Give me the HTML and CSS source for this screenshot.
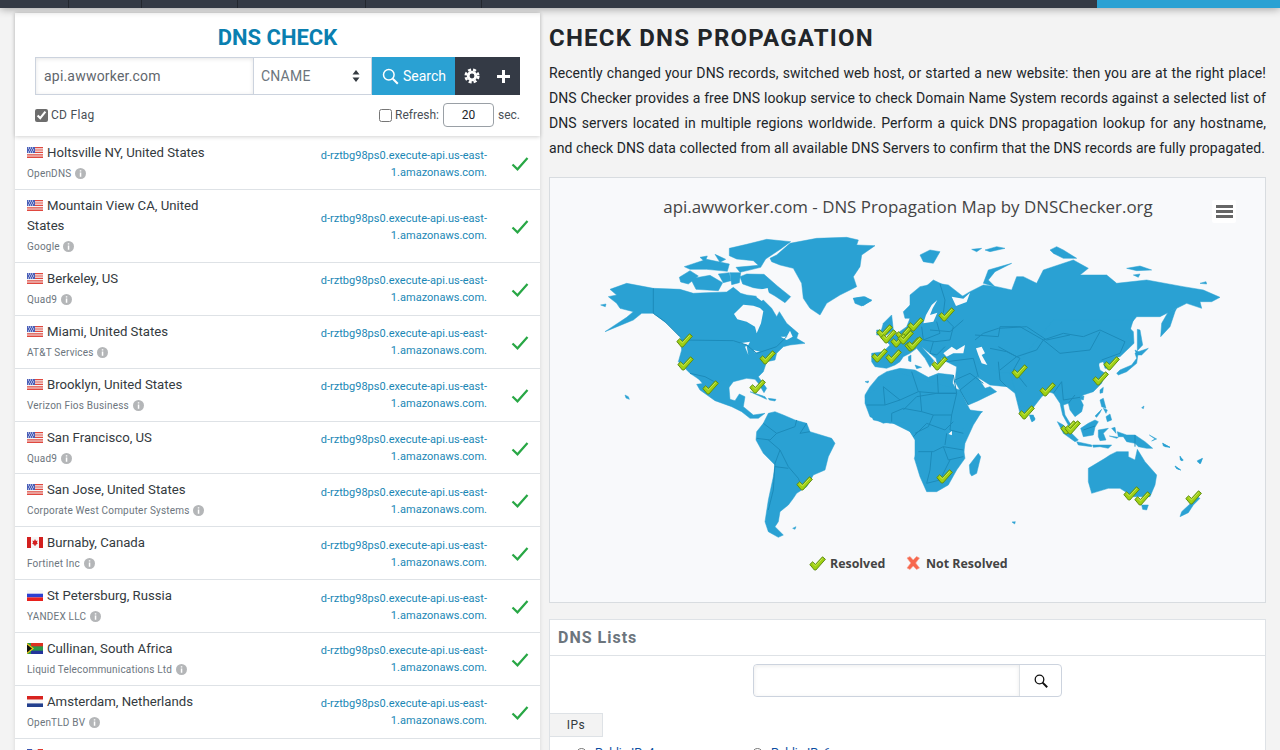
FILE: index.html
```html
<!DOCTYPE html>
<html lang="en">
<head>
<meta charset="utf-8">
<title>DNS Check</title>
<link rel="stylesheet" href="styles.css">
</head>
<body>
<svg class="defs" width="0" height="0" aria-hidden="true">
  <symbol id="f-us" viewBox="0 0 16 11"><rect width="16" height="11" fill="#f4f4f4"/><path d="M0 0h16v1.2H0zM0 2.4h16v1.2H0zM0 4.8h16v1.2H0zM0 7.2h16v1.2H0zM0 9.6h16V11H0z" fill="#e0483f"/><rect width="8" height="6" fill="#4a5fb8"/><path d="M1 1h1M3 1h1M5 1h1M2 3h1M4 3h1M6 3h1M1 5h1M3 5h1M5 5h1" stroke="#fff"/></symbol>
  <symbol id="f-ca" viewBox="0 0 16 11"><rect width="16" height="11" fill="#f6f6f6"/><rect width="4" height="11" fill="#d3201f"/><rect x="12" width="4" height="11" fill="#d3201f"/><path d="M8 2l1 2 1.500-.5-.5 2.500 1 .5-2.500 1.500v1H7.500V8L5 6.500 6 6l-.5-2.500L7 4z" fill="#d3201f"/></symbol>
  <symbol id="f-ru" viewBox="0 0 16 11"><rect width="16" height="3.700" fill="#f6f6f6"/><rect y="3.700" width="16" height="3.700" fill="#2b3fd0"/><rect y="7.400" width="16" height="3.600" fill="#e8201c"/></symbol>
  <symbol id="f-za" viewBox="0 0 16 11"><rect width="16" height="11" fill="#2a9a4a"/><rect x="4" width="12" height="3.300" fill="#dd3020"/><rect x="4" y="7.700" width="12" height="3.300" fill="#24349c"/><path d="M0 0l7 5.500L0 11z" fill="#f0c814"/><path d="M0 1.500l5 4-5 4z" fill="#111"/></symbol>
  <symbol id="f-nl" viewBox="0 0 16 11"><rect width="16" height="3.700" fill="#d8231f"/><rect y="3.700" width="16" height="3.700" fill="#f6f6f6"/><rect y="7.400" width="16" height="3.600" fill="#23408e"/></symbol>
  <symbol id="f-fr" viewBox="0 0 16 11"><rect width="5.400" height="11" fill="#3a55b0"/><rect x="5.400" width="5.300" height="11" fill="#f6f6f6"/><rect x="10.700" width="5.300" height="11" fill="#e0382f"/></symbol>
  <symbol id="info" viewBox="0 0 11 11"><circle cx="5.500" cy="5.500" r="5.500" fill="#b4b6b8"/><path d="M4.800 2.200h1.500v1.400H4.800zM4.800 4.600h1.500v4.200H4.800z" fill="#fff"/></symbol>
  <symbol id="ok" viewBox="0 0 18 15"><path d="M1.500 8.500l5 4.800L16.500 2" fill="none" stroke="#28a745" stroke-width="2.200"/></symbol>
  <symbol id="chk" viewBox="0 0 17 15"><path d="M.8 8.500L3.600 5.800l2.800 2.700L13.500.8l2.900 2.500L6.900 14H5.400z" fill="#9fd012" stroke="#5f8c14"/><path d="M3.600 7.200l2.900 2.700 7.100-7.600" fill="none" stroke="#c6e85a"/></symbol>
</svg>

<nav class="topbar">
  <span class="nav-item nav-a"></span><span class="nav-item nav-b"></span><span class="nav-item nav-c"></span><span class="nav-item nav-d"></span><span class="nav-item nav-e"></span>
  <span class="nav-accent"></span>
</nav>

<main class="page">
  <aside class="sidebar">
    <section class="check-form">
      <h2 class="check-title">DNS CHECK</h2>
      <div class="search-row">
        <input class="host-input" type="text" value="api.awworker.com">
        <div class="type-select"><span>CNAME</span>
          <svg width="8" height="12" viewBox="0 0 8 12"><path d="M4 0l3.500 4.500h-7zM4 12L.5 7.500h7z" fill="#343a40"/></svg>
        </div>
        <button class="search-btn" type="button">
          <svg width="17" height="17" viewBox="0 0 17 17"><circle cx="6.800" cy="6.800" r="5.300" fill="none" stroke="#fff" stroke-width="1.500"/><path d="M10.800 10.800l5 5" stroke="#fff" stroke-width="2"/></svg>
          Search
        </button>
        <div class="tool-btns">
          <svg width="16" height="16" viewBox="0 0 16 16"><circle cx="8" cy="8" r="3.800" fill="none" stroke="#fff" stroke-width="2.800"/><circle cx="8" cy="8" r="6.300" fill="none" stroke="#fff" stroke-width="2.600" stroke-dasharray="3 2"/></svg>
          <svg width="13" height="13" viewBox="0 0 13 13"><path d="M5 0h3v5h5v3H8v5H5V8H0V5h5z" fill="#fff"/></svg>
        </div>
      </div>
      <div class="options-row">
        <label class="opt cd"><input class="cd-check" type="checkbox" checked> CD Flag</label>
        <label class="opt refresh"><input class="refresh-check" type="checkbox"> Refresh:
          <input class="refresh-input" type="text" value="20"> sec.</label>
      </div>
    </section>

    <ul class="results">
      <li class="result"><div class="place"><div class="city"><svg class="flag"><use href="#f-us"/></svg>Holtsville NY, United States</div><div class="isp">OpenDNS <svg class="info"><use href="#info"/></svg></div></div><div class="answer">d-rztbg98ps0.execute-api.us-east-1.amazonaws.com.</div><svg class="ok"><use href="#ok"/></svg></li>
      <li class="result"><div class="place"><div class="city"><svg class="flag"><use href="#f-us"/></svg>Mountain View CA, United States</div><div class="isp">Google <svg class="info"><use href="#info"/></svg></div></div><div class="answer">d-rztbg98ps0.execute-api.us-east-1.amazonaws.com.</div><svg class="ok"><use href="#ok"/></svg></li>
      <li class="result"><div class="place"><div class="city"><svg class="flag"><use href="#f-us"/></svg>Berkeley, US</div><div class="isp">Quad9 <svg class="info"><use href="#info"/></svg></div></div><div class="answer">d-rztbg98ps0.execute-api.us-east-1.amazonaws.com.</div><svg class="ok"><use href="#ok"/></svg></li>
      <li class="result"><div class="place"><div class="city"><svg class="flag"><use href="#f-us"/></svg>Miami, United States</div><div class="isp">AT&amp;T Services <svg class="info"><use href="#info"/></svg></div></div><div class="answer">d-rztbg98ps0.execute-api.us-east-1.amazonaws.com.</div><svg class="ok"><use href="#ok"/></svg></li>
      <li class="result"><div class="place"><div class="city"><svg class="flag"><use href="#f-us"/></svg>Brooklyn, United States</div><div class="isp">Verizon Fios Business <svg class="info"><use href="#info"/></svg></div></div><div class="answer">d-rztbg98ps0.execute-api.us-east-1.amazonaws.com.</div><svg class="ok"><use href="#ok"/></svg></li>
      <li class="result"><div class="place"><div class="city"><svg class="flag"><use href="#f-us"/></svg>San Francisco, US</div><div class="isp">Quad9 <svg class="info"><use href="#info"/></svg></div></div><div class="answer">d-rztbg98ps0.execute-api.us-east-1.amazonaws.com.</div><svg class="ok"><use href="#ok"/></svg></li>
      <li class="result"><div class="place"><div class="city"><svg class="flag"><use href="#f-us"/></svg>San Jose, United States</div><div class="isp">Corporate West Computer Systems <svg class="info"><use href="#info"/></svg></div></div><div class="answer">d-rztbg98ps0.execute-api.us-east-1.amazonaws.com.</div><svg class="ok"><use href="#ok"/></svg></li>
      <li class="result"><div class="place"><div class="city"><svg class="flag"><use href="#f-ca"/></svg>Burnaby, Canada</div><div class="isp">Fortinet Inc <svg class="info"><use href="#info"/></svg></div></div><div class="answer">d-rztbg98ps0.execute-api.us-east-1.amazonaws.com.</div><svg class="ok"><use href="#ok"/></svg></li>
      <li class="result"><div class="place"><div class="city"><svg class="flag"><use href="#f-ru"/></svg>St Petersburg, Russia</div><div class="isp">YANDEX LLC <svg class="info"><use href="#info"/></svg></div></div><div class="answer">d-rztbg98ps0.execute-api.us-east-1.amazonaws.com.</div><svg class="ok"><use href="#ok"/></svg></li>
      <li class="result"><div class="place"><div class="city"><svg class="flag"><use href="#f-za"/></svg>Cullinan, South Africa</div><div class="isp">Liquid Telecommunications Ltd <svg class="info"><use href="#info"/></svg></div></div><div class="answer">d-rztbg98ps0.execute-api.us-east-1.amazonaws.com.</div><svg class="ok"><use href="#ok"/></svg></li>
      <li class="result"><div class="place"><div class="city"><svg class="flag"><use href="#f-nl"/></svg>Amsterdam, Netherlands</div><div class="isp">OpenTLD BV <svg class="info"><use href="#info"/></svg></div></div><div class="answer">d-rztbg98ps0.execute-api.us-east-1.amazonaws.com.</div><svg class="ok"><use href="#ok"/></svg></li>
      <li class="result"><div class="place"><div class="city"><svg class="flag"><use href="#f-fr"/></svg>Paris, France</div></div></li>
    </ul>
  </aside>

  <div class="content">
    <h1 class="headline">CHECK DNS PROPAGATION</h1>
    <p class="intro">Recently changed your DNS records, switched web host, or started a new website: then you are at the right place! DNS Checker provides a free DNS lookup service to check Domain Name System records against a selected list of DNS servers located in multiple regions worldwide. Perform a quick DNS propagation lookup for any hostname, and check DNS data collected from all available DNS Servers to confirm that the DNS records are fully propagated.</p>

    <section class="map-card">
      <svg class="map" viewBox="550 178 715 424" width="715" height="424">
        <text class="map-title" x="908" y="213" text-anchor="middle">api.awworker.com - DNS Propagation Map by DNSChecker.org</text>
        <rect x="1212" y="200" width="24" height="23" rx="2" fill="#fff"/>
        <path d="M1216 205h17v3h-17zM1216 210h17v3h-17zM1216 215h17v3h-17z" fill="#666"/>

        <g transform="translate(590 180) scale(.33333)">
          <g class="land">
            <polygon points="60,328 110,310 190,325 270,328 310,340 350,338 410,336 430,322 452,340 470,345 510,350 545,385 560,410 568,395 590,430 625,460 620,475 645,490 600,495 580,500 560,520 555,540 530,545 520,575 505,590 530,625 522,638 505,610 495,598 470,595 430,605 415,625 415,650 400,665 375,660 330,600 300,580 265,545 275,510 270,470 260,460 230,430 190,400 155,400 130,420 45,455 110,412 130,395 90,385 80,370 55,350 80,345"/>
            <polygon points="268,292 300,272 325,288 295,312 272,306"/>
            <polygon points="302,296 360,286 398,308 385,332 318,328"/>
            <polygon points="385,282 418,278 423,302 400,308"/>
            <polygon points="420,278 452,278 448,308 425,314"/>
            <polygon points="283,260 350,238 418,252 412,274 350,268 300,268"/>
            <polygon points="330,232 352,228 345,246"/>
            <polygon points="375,223 407,238 390,247"/>
            <polygon points="418,205 470,193 530,178 602,185 572,207 527,237 512,262 450,277 438,262 505,256 490,242 440,237 418,227"/>
            <polygon points="450,290 470,282 522,283 562,318 602,350 585,368 555,348 520,328 490,323 458,312"/>
            <polygon points="540,235 560,225 600,190 680,175 770,172 805,180 800,195 855,197 815,225 810,260 790,290 800,320 750,345 710,370 690,405 660,385 640,355 635,310 610,265 570,255 545,245"/>
            <polygon points="790,355 825,350 845,362 815,378 795,370"/>
            <polygon points="320,590 345,610 365,640 340,612"/>
            <polygon points="32,375 48,372 46,380"/>
            <polygon points="105,645 115,650 118,658 108,654"/>
          </g>
          <g class="water">
            <polygon points="432,402 460,374 490,377 510,384 520,394 513,430 500,460 495,440 470,425 442,418"/>
            <polygon points="497,332 533,324 538,345 515,363 500,352"/>
            <polygon points="450,490 480,485 475,495"/>
            <polygon points="465,500 475,525 470,498"/>
            <polygon points="490,510 510,515 495,518"/>
            <polygon points="572,470 590,470 600,452 608,470 590,480"/>
          </g>
          <g class="border">
            <polyline points="190,325 190,400 225,425 270,470"/>
            <polyline points="272,480 430,482 470,495 500,520 560,500 590,470"/>
            <polyline points="300,580 345,590 400,620 415,650"/>
          </g>
        </g>

        <g transform="translate(850 290) scale(.33333)">
          <g class="land">
            <polygon points="65,190 100,185 120,165 105,150 135,135 170,110 180,85 165,85 160,65 190,35 210,5 250,-30 294,-9 339,30 375,30 420,15 600,100 700,200 660,300 640,310 600,300 575,320 525,385 510,370 495,310 470,290 420,285 380,260 385,265 405,295 420,290 440,305 385,332 355,345 315,275 320,230 290,215 275,205 265,235 258,205 215,170 252,212 240,232 225,205 200,175 180,190 160,200 150,215 135,225 110,235 75,230 65,215"/>
            <polygon points="100,100 125,75 130,120 110,135 90,135"/>
            <polygon points="80,120 95,120 92,135 80,135"/>
            <polygon points="45,315 60,290 85,260 110,245 150,235 195,240 235,262 265,250 310,255 308,280 350,350 365,365 395,365 370,405 345,460 340,500 195,500 195,450 180,425 120,395 100,400 60,380 45,340"/>
            <polygon points="545,375 555,385 548,395 542,385"/>
            <polygon points="175,200 183,195 183,215 176,213"/>
            <polygon points="195,225 215,232 200,236"/>
            <polygon points="10,25 40,20 65,30 40,47 20,40"/>
            <polygon points="45,275 56,273 54,279"/>
          </g>
        </g>

        <g transform="translate(920 180) scale(.33333)">
          <g class="land">
            <polygon points="-30,345 0,320 50,310 85,315 130,350 100,365 150,335 190,315 230,320 275,330 290,290 310,290 350,310 370,270 460,240 505,265 480,285 560,285 590,310 680,300 790,320 850,330 900,352 875,365 840,365 845,385 800,370 770,385 720,410 650,410 625,440 640,455 642,490 600,530 540,540 530,580 240,580 -30,450"/>
            <polygon points="770,385 745,395 725,430 722,470 750,440 765,395"/>
            <polygon points="0,225 30,210 60,215 40,250 10,245"/>
            <polygon points="155,208 185,205 170,215"/>
            <polygon points="195,210 230,200 255,205 210,215"/>
            <polygon points="190,310 205,270 275,250 225,275 205,300 225,320"/>
            <polygon points="390,210 410,200 430,210 470,235 430,235 400,220"/>
            <polygon points="620,265 660,258 695,270 650,272"/>
            <polygon points="640,285 660,282 655,292"/>
            <polygon points="840,310 858,305 860,312"/>
            <polygon points="652,448 660,450 668,495 652,512"/>
          </g>
        </g>

        <g transform="translate(1020 340) scale(.33333)">
          <g class="land">
            <polygon points="340,-60 310,35 285,55 270,85 255,85 250,65 235,70 240,90 255,100 245,130 220,155 190,165 180,175 190,195 185,215 165,230 150,210 145,190 130,195 135,225 150,250 165,270 150,265 128,225 120,190 100,160 85,155 60,165 40,195 0,200 -30,100 100,-60"/>
            <polygon points="290,100 300,90 335,75 350,55 345,40 355,35 350,70 320,95 295,105"/>
            <polygon points="345,30 355,35 385,25 365,45 350,45"/>
            <polygon points="240,150 250,142 248,158 240,160"/>
            <polygon points="178,170 192,168 190,180 180,178"/>
            <polygon points="240,180 250,175 258,205 245,200"/>
            <polygon points="258,230 270,222 275,240 262,245"/>
            <polygon points="225,228 245,208 240,218 230,232"/>
            <polygon points="250,205 262,210 258,220"/>
            <polygon points="112,245 130,255 175,300 165,305 130,280"/>
            <polygon points="170,305 215,315 215,320 175,315"/>
            <polygon points="218,315 275,315 265,325 240,320 220,322"/>
            <polygon points="182,265 205,250 225,240 235,245 225,262 220,285 190,290"/>
            <polygon points="235,270 265,265 250,280 258,300 240,302 235,290"/>
            <polygon points="275,265 285,262 288,280"/>
            <polygon points="268,288 295,292 290,295"/>
            <polygon points="292,275 320,285 345,285 375,305 398,325 380,325 355,320 345,310 320,305 310,290 295,290"/>
            <polygon points="388,285 410,297 395,303 405,297"/>
            <polygon points="428,310 450,322 430,318"/>
            <polygon points="480,350 490,360 484,362"/>
            <polygon points="465,378 482,390 470,385"/>
            <polygon points="532,362 548,355 540,372"/>
            <polygon points="365,203 372,198 370,206"/>
            <polygon points="205,385 255,355 270,345 290,335 325,335 325,350 345,360 352,328 375,365 410,405 405,435 390,470 340,470 300,445 265,445 215,460 205,425"/>
            <polygon points="28,225 40,225 45,240 35,245"/>
          </g>
          <g class="border">
            <polyline points="100,160 125,125 130,180"/>
            <polyline points="130,180 180,172"/>
            <polyline points="145,190 165,165"/>
            <polyline points="345,285 345,320"/>
            <polyline points="190,270 225,258"/>
          </g>
        </g>

        <g transform="translate(700 390) scale(.33333)">
          <g class="land">
            <polygon points="-10,-17 0,0 45,32 95,50 125,65 150,85 175,85 195,70 160,75 130,50 135,20 118,12 105,32 90,28 85,-30"/>
            <polygon points="168,150 170,125 190,100 205,70 225,65 250,75 285,90 320,100 330,125 395,145 405,160 385,200 375,240 340,255 320,290 290,310 280,325 265,345 240,365 235,395 225,410 250,435 235,442 205,425 195,395 205,330 220,260 225,225 190,190"/>
            <polygon points="278,415 288,410 285,418"/>
            <polygon points="150,5 195,20 200,28 165,12"/>
            <polygon points="205,25 228,28 225,33 208,30"/>
            <polygon points="495,20 520,90 570,100 615,100 630,125 650,150 655,170 643,205 660,260 680,305 710,305 745,285 770,240 795,205 790,175 765,140 790,115 815,85 848,65 810,60 780,0 600,-50"/>
            <polygon points="810,250 808,225 835,190 842,200 830,250 815,258"/>
            <polygon points="1325,345 1345,345 1340,360 1328,358"/>
            <polygon points="1440,380 1465,368 1480,345 1500,325 1490,320 1470,342 1445,365"/>
            <polygon points="936,396 946,395 944,402"/>
            <polygon points="1425,228 1442,240 1430,236"/>
            <polygon points="1440,198 1448,212 1441,210"/>
            <polygon points="1492,215 1506,206 1502,220"/>
            <polygon points="1388,160 1410,172 1395,170"/>
          </g>
          <g class="water"><polygon points="748,130 756,122 755,136"/></g>
          <g class="border">
            <polyline points="190,100 230,130 210,150 170,145"/>
            <polyline points="230,130 285,110 290,90"/>
            <polyline points="320,100 300,130 330,125"/>
            <polyline points="205,150 240,180 225,220 220,300 205,360"/>
            <polyline points="240,180 265,230 295,265 305,290"/>
            <polyline points="225,230 265,235"/>
            <polyline points="640,140 680,100 735,120 760,95"/>
            <polyline points="655,185 700,185 730,170 790,180"/>
            <polyline points="695,185 690,240 680,280 720,270 750,210"/>
            <polyline points="730,170 745,210 790,200"/>
            <polyline points="740,130 735,165"/>
            <polyline points="610,60 650,20 710,10 770,10"/>
          </g>
        </g>

        <g transform="translate(920 180) scale(.33333)">
          <g class="water"><polygon points="95,350 130,356 150,338 140,366 108,378"/></g>
          <g class="border">
            <polyline points="165,465 235,470 240,440 300,440 370,480 430,460 490,470 540,450 615,485 600,520 545,540"/>
            <polyline points="370,480 420,520 510,510 540,455"/>
            <polyline points="370,480 350,510 290,530 240,570"/>
            <polyline points="235,500 290,530"/>
            <polyline points="60,312 75,360 70,400"/>
          </g>
        </g>

        <g transform="translate(850 290) scale(.33333)">
          <g class="water">
            <polygon points="220,100 228,75 245,45 262,30 248,55 240,75 262,68 250,95"/>
            <polygon points="280,190 305,170 320,180 345,165 340,190 310,190 290,200"/>
            <polygon points="378,175 395,170 405,190 395,195 412,225 395,220 385,195"/>
            <polygon points="295,432 305,425 305,435"/>
          </g>
          <g class="border">
            <polyline points="100,290 150,330 205,305 185,245"/>
            <polyline points="205,305 265,310 262,255"/>
            <polyline points="265,310 320,310 310,255"/>
            <polyline points="210,305 215,365 250,375 305,375 320,310"/>
            <polyline points="50,345 105,345 100,290"/>
            <polyline points="105,345 150,330"/>
            <polyline points="125,395 125,370 160,355 215,365"/>
            <polyline points="250,375 235,410 195,430"/>
            <polyline points="305,375 300,420 340,430"/>
            <polyline points="215,110 220,150 255,155 300,150 310,110 290,90"/>
            <polyline points="260,95 270,130 220,150"/>
            <polyline points="250,155 240,190 260,195 285,170"/>
            <polyline points="290,215 370,205 385,260"/>
            <polyline points="360,250 315,270"/>
            <polyline points="360,250 400,280"/>
            <polyline points="375,150 400,130 445,115 530,110 590,150 660,135"/>
            <polyline points="420,175 470,185 510,205 490,240 530,290"/>
            <polyline points="445,215 450,270 470,290"/>
            <polyline points="240,120 300,125 340,90"/>
            <polyline points="380,260 330,300 355,345"/>
          </g>
        </g>

        <g class="marks">
          <use href="#chk" x="676" y="333" width="17" height="15"/>
          <use href="#chk" x="677" y="356" width="17" height="15"/>
          <use href="#chk" x="702" y="380" width="17" height="15"/>
          <use href="#chk" x="759" y="350" width="17" height="15"/>
          <use href="#chk" x="749" y="379" width="17" height="15"/>
          <use href="#chk" x="876" y="324" width="17" height="15"/>
          <use href="#chk" x="880" y="329" width="17" height="15"/>
          <use href="#chk" x="895" y="326" width="17" height="15"/>
          <use href="#chk" x="907" y="317" width="17" height="15"/>
          <use href="#chk" x="890" y="333" width="17" height="15"/>
          <use href="#chk" x="897" y="330" width="17" height="15"/>
          <use href="#chk" x="904" y="337" width="17" height="15"/>
          <use href="#chk" x="906" y="336" width="17" height="15"/>
          <use href="#chk" x="871" y="348" width="17" height="15"/>
          <use href="#chk" x="885" y="349" width="17" height="15"/>
          <use href="#chk" x="938" y="307" width="17" height="15"/>
          <use href="#chk" x="931" y="356" width="17" height="15"/>
          <use href="#chk" x="1011" y="364" width="17" height="15"/>
          <use href="#chk" x="1039" y="382" width="17" height="15"/>
          <use href="#chk" x="1103" y="356" width="17" height="15"/>
          <use href="#chk" x="1092" y="371" width="17" height="15"/>
          <use href="#chk" x="1018" y="405" width="17" height="15"/>
          <use href="#chk" x="1060" y="420" width="17" height="15"/>
          <use href="#chk" x="1064" y="420" width="17" height="15"/>
          <use href="#chk" x="796" y="476" width="17" height="15"/>
          <use href="#chk" x="936" y="469" width="17" height="15"/>
          <use href="#chk" x="1123" y="486" width="17" height="15"/>
          <use href="#chk" x="1134" y="491" width="17" height="15"/>
          <use href="#chk" x="1185" y="490" width="17" height="15"/>
        </g>

        <use href="#chk" x="809" y="556" width="17" height="15"/>
        <text class="legend-text" x="830" y="568">Resolved</text>
        <path d="M907 558l3-1.500 3.200 3.500 3.300-3.500 3 1.500-3.800 5 3.800 5-3 1.500-3.300-3.500-3.200 3.500-3-1.500 3.800-5z" fill="#f7674d" stroke="#f7a190" stroke-width=".6"/>
        <text class="legend-text" x="926" y="568">Not Resolved</text>
      </svg>
    </section>

    <section class="lists-card">
      <h3 class="lists-title">DNS Lists</h3>
      <div class="lists-body">
        <div class="lists-search">
          <input class="lists-input" type="text">
          <span class="lists-btn"><svg width="14" height="14" viewBox="0 0 14 14"><circle cx="5.500" cy="5.500" r="4.300" fill="none" stroke="#111" stroke-width="1.300"/><path d="M8.600 8.600l4.600 4.600" stroke="#111" stroke-width="2"/></svg></span>
        </div>
        <span class="tab">IPs</span>
        <div class="radios">
          <label class="radio-item"><span class="radio-dot"></span>Public IPv4</label>
          <label class="radio-item"><span class="radio-dot"></span>Public IPv6</label>
        </div>
      </div>
    </section>
  </div>
</main>
</body>
</html>
```

FILE: styles.css
```css
* { box-sizing: border-box; }
html, body { margin: 0; height: 750px; overflow: hidden; }
body { background: #f3f3f3; font-family: Roboto, "Liberation Sans", Arial, sans-serif; color: #212529; font-size: 14px; }
.defs { position: absolute; }

.topbar { display: flex; height: 8px; background: #343a45; box-shadow: 0 0 10px rgba(0,0,0,.45); position: relative; }
.nav-item { border-right: 1px solid #23272e; height: 8px; }
.nav-a { width: 69px; }
.nav-b { width: 73px; }
.nav-c { width: 96px; }
.nav-d { width: 128px; }
.nav-e { width: 116px; }
.nav-accent { margin-left: auto; width: 183px; background: #2aa1d3; }

.page { display: flex; align-items: flex-start; padding: 5px 0 0 15px; gap: 9px; }

.sidebar { width: 525px; flex: none; background: #fff; box-shadow: 0 0 4px rgba(0,0,0,.12); }
.check-form { height: 123px; padding: 11px 20px 0; box-shadow: 0 1px 4px rgba(0,0,0,.18); position: relative; }
.check-title { margin: 0 0 6px; text-align: center; color: #0a7fb0; font-size: 22px; line-height: 27px; font-weight: 700; }
.search-row { display: flex; height: 38px; }
.host-input { width: 218px; height: 38px; border: 1px solid #ccd3de; border-right: 0; padding: 0 8px; font: 14px Roboto, sans-serif; letter-spacing: .2px; color: #5f666d; box-shadow: inset 0 1px 4px rgba(0,0,0,.1); outline: 0; }
.type-select { width: 119px; display: flex; align-items: center; justify-content: space-between; padding: 0 11px 0 7px; border: 1px solid #ccd3de; color: #6c757d; letter-spacing: .2px; }
.search-btn { width: 83px; border: 0; padding: 0 0 0 10px; display: flex; align-items: center; gap: 4px; background: #2aa1d3; color: #fff; font: 14px Roboto, sans-serif; }
.tool-btns { width: 65px; display: flex; align-items: center; justify-content: space-between; padding: 0 10px 0 9px; background: #343a45; }
.options-row { display: flex; justify-content: space-between; align-items: center; height: 24px; margin-top: 8px; font-size: 12px; color: #495057; }
.opt { display: flex; align-items: center; gap: 3px; }
.cd { letter-spacing: .3px; }
.cd-check, .refresh-check { width: 13px; height: 13px; margin: 0; accent-color: #6d6d6d; }
.refresh-input { width: 51px; height: 24px; margin: 0 1px 0 1px; border: 1px solid #9aa0a6; border-radius: 4px; text-align: center; font: 12px Roboto, sans-serif; color: #212529; outline: 0; }

.results { list-style: none; margin: 0; padding: 1.300px 0 0; }
.result { display: flex; align-items: center; padding: 6px 0 4.850px 12px; border-bottom: 1px solid #dee2e6; }
.place { width: 190px; flex: none; }
.city { font-size: 13.200px; line-height: 20px; color: #343a40; }
.flag { width: 16px; height: 11px; margin-right: 4px; vertical-align: -1px; }
.isp { height: 21px; font-size: 10px; line-height: 21px; color: #6c757d; letter-spacing: .2px; }
.info { width: 11px; height: 11px; margin-left: 1px; vertical-align: -2px; }
.answer { width: 170px; margin-left: auto; text-align: right; font-size: 11px; letter-spacing: .02px; line-height: 17px; color: #1a87b5; }
.ok { width: 18px; height: 15px; flex: none; margin: 0 11px 0 24px; }

.content { width: 717px; flex: none; }
.headline { margin: 0; padding-top: 2px; height: 48px; font-size: 24px; line-height: 46px; font-weight: 700; letter-spacing: 1.200px; color: #212529; }
.intro { margin: 0 0 16px; font-size: 14px; line-height: 25px; letter-spacing: .07px; text-align: justify; color: #212529; }
.map-card { height: 426px; border: 1px solid #d8dce0; background: #f8f9fb; }
.map { display: block; }
.map-title { font: 16.900px "Open Sans", sans-serif; fill: #444; }
.legend-text { font: 700 12.400px "Open Sans", sans-serif; fill: #444; }
.land polygon { fill: #2aa1d3; stroke: #2aa1d3; stroke-width: 1.500; stroke-linejoin: round; }
.water polygon { fill: #f8f9fb; }
.border polyline { fill: none; stroke: #1c8bba; stroke-width: 3; }

.lists-card { margin-top: 16px; background: #fff; border: 1px solid #dee2e6; height: 200px; }
.lists-title { margin: 0; height: 36px; padding-left: 8px; border-bottom: 1px solid #dee2e6; font-size: 16px; line-height: 35px; font-weight: 700; letter-spacing: 1px; color: #6c757d; }
.lists-body { padding-top: 8px; }
.lists-search { display: flex; width: 309px; height: 33px; margin: 0 auto 16px; border: 1px solid #ccd3de; border-radius: 4px; }
.lists-input { flex: 1; min-width: 0; border: 0; border-radius: 4px 0 0 4px; box-shadow: inset 0 1px 4px rgba(0,0,0,.08); outline: 0; }
.lists-btn { width: 42px; display: flex; align-items: center; justify-content: center; border-left: 1px solid #dee2e6; }
.tab { display: block; width: 53px; height: 24px; background: #f3f3f3; border: 1px solid #dee2e6; border-left: 0; text-align: center; font-size: 12px; line-height: 22px; letter-spacing: .5px; color: #343a40; }
.radios { display: flex; padding: 9px 0 0 26px; }
.radio-item { width: 176px; display: flex; align-items: center; gap: 8px; font-size: 12px; color: #0b4ea2; }
.radio-dot { width: 11px; height: 11px; border: 1px solid #777; border-radius: 50%; }
```
